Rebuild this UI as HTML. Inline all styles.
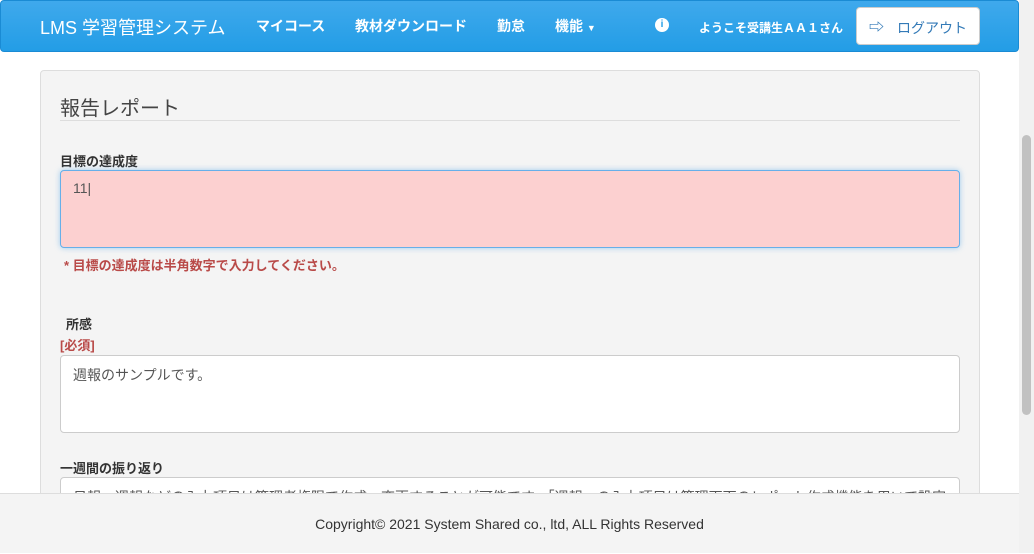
<!DOCTYPE html>
<html><head><meta charset="utf-8"><style>
*{box-sizing:border-box}
body{margin:0;width:1034px;height:553px;overflow:hidden;background:#fff;font-family:"Liberation Sans","Noto Sans CJK JP",sans-serif;position:relative}
.nav{position:absolute;left:0;top:0;width:1019px;height:52px;background:linear-gradient(#3fa9ec,#239de6);border:1px solid #1a8bd4;border-radius:4px;color:#fff}
.nav span{position:absolute;top:15px;font-size:14px;font-weight:bold;white-space:nowrap}
.brand{left:39px!important;top:13px!important;font-size:18px!important;font-weight:normal!important}
.btn{position:absolute;left:856px;top:7px;width:124px;height:38px;background:#fff;border:1px solid #ccc;border-radius:4px;color:#337ab7;font-size:14px}
.panel{position:absolute;left:40px;top:70px;width:940px;height:440px;background:#f4f4f4;border:1px solid #ddd;border-radius:4px}
.t{position:absolute;font-size:14px;color:#333}
.ta{position:absolute;left:60px;width:900px;background:#fff;border:1px solid #ccc;border-radius:4px;font-size:14px;color:#555;padding:9px 12px}
.foot{position:absolute;left:0;top:493px;width:1019px;height:60px;background:#f4f4f4;border-top:1px solid #ddd;text-align:center;font-size:14px;color:#333;line-height:60px}
.sb{position:absolute;left:1019px;top:0;width:15px;height:553px;background:#f1f1f1}
.thumb{position:absolute;left:1022px;top:135px;width:9px;height:280px;background:#c1c1c1;border-radius:5px}
</style></head><body>
<div class="nav">
<span class="brand">LMS 学習管理システム</span>
<span style="left:255px">マイコース</span>
<span style="left:354px">教材ダウンロード</span>
<span style="left:496px">勤怠</span>
<span style="left:554px">機能 <small style="font-size:9px">▼</small></span>
<span style="left:654px;top:17px;width:14px;height:14px;border-radius:50%;background:#fff;color:#239de6;font-size:10px;text-align:center;line-height:14px">i</span>
<span style="left:698px;top:18px;font-size:12px">ようこそ受講生ＡＡ１さん</span>
</div>
<div class="btn"><span style="position:absolute;left:12px;top:8px;font-weight:bold;font-size:15px">⇨</span><span style="position:absolute;left:40px;top:10px">ログアウト</span></div>
<div class="panel"></div>
<div class="t" style="left:60px;top:92px;font-size:20px;color:#444">報告レポート</div>
<div style="position:absolute;left:60px;top:120px;width:900px;border-top:1px solid #ddd"></div>
<div class="t" style="left:60px;top:151px;font-weight:bold;font-size:13px">目標の達成度</div>
<div class="ta" style="top:170px;height:78px;background:#fcd0d0;border-color:#66afe9;box-shadow:0 0 6px rgba(102,175,233,.6)">11|</div>
<div class="t" style="left:64px;top:255px;font-weight:bold;font-size:13px;color:#b94a48">* 目標の達成度は半角数字で入力してください。</div>
<div class="t" style="left:66px;top:314px;font-weight:bold;font-size:13px">所感</div>
<div class="t" style="left:60px;top:335px;font-weight:bold;font-size:13px;color:#b94a48">[必須]</div>
<div class="ta" style="top:355px;height:78px">週報のサンプルです。</div>
<div class="t" style="left:60px;top:458px;font-weight:bold;font-size:13px">一週間の振り返り</div>
<div class="ta" style="top:477px;height:40px;white-space:nowrap;overflow:hidden">日報・週報などの入力項目は管理者権限で作成・変更することが可能です。「週報」の入力項目は管理画面のレポート作成機能を用いて設定</div>
<div class="foot">Copyright© 2021 System Shared co., ltd, ALL Rights Reserved</div>
<div class="sb"></div><div class="thumb"></div>
</body></html>
